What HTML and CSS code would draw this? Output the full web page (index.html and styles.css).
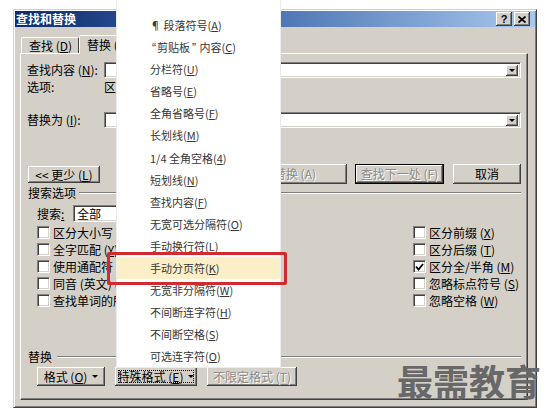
FILE: index.html
```html
<!DOCTYPE html>
<html lang="zh-CN">
<head>
<meta charset="utf-8">
<title>查找和替换</title>
<link rel="stylesheet" href="styles.css">
</head>
<body>
<div class="dialog">
  <div class="titlebar">
    <span class="title">查找和替换</span>
    <span class="tbtns">
      <span class="tbtn help">?</span>
      <span class="tbtn close"><svg width="8" height="7" viewBox="0 0 8 7"><path d="M0.5 0.5 L7.5 6.5 M7.5 0.5 L0.5 6.5" stroke="#000" stroke-width="1.7" fill="none"/></svg></span>
    </span>
  </div>
  <div class="tabs">
    <span class="tab">查找 (<u>D</u>)</span>
    <span class="tab active">替换 (<u>P</u>)</span>
  </div>
  <div class="panel">
    <div class="row r-find">
      <span class="lbl">查找内容 (<u>N</u>):</span>
      <span class="combo wide"><span class="arrow"><i></i></span></span>
    </div>
    <div class="row r-opt">
      <span class="lbl">选项:</span><span>区</span>
    </div>
    <div class="row r-repl">
      <span class="lbl">替换为 (<u>I</u>):</span>
      <span class="combo wide"><span class="arrow"><i></i></span></span>
    </div>
    <div class="row r-btns">
      <button class="btn less">&lt;&lt; 更少 (<u>L</u>)</button>
      <span class="btngroup">
        <button class="btn dis w88 all">替换 (A)</button>
        <button class="btn dis def w89">查找下一处 (F)</button>
        <button class="btn w68">取消</button>
      </span>
    </div>
    <div class="row ghead r-ghead1"><span class="gl">搜索选项</span><span class="line"></span></div>
    <div class="row r-search">
      <span class="slbl">搜索<u>:</u></span>
      <span class="combo small"><span class="val">全部</span></span>
    </div>
    <div class="checks">
      <span class="chk"><span class="box"></span>区分大小写 (<u>H</u>)</span>
      <span class="chk"><span class="box"></span>区分前缀 (<u>X</u>)</span>
      <span class="chk"><span class="box"></span>全字匹配 (<u>Y</u>)</span>
      <span class="chk"><span class="box"></span>区分后缀 (<u>T</u>)</span>
      <span class="chk"><span class="box"></span>使用通配符 (<u>U</u>)</span>
      <span class="chk"><span class="box"><svg width="9" height="8" viewBox="0 0 9 8"><path d="M1 3.5 L3.5 6.5 L8 1" stroke="#000" stroke-width="1.8" fill="none"/></svg></span>区分全/半角 (<u>M</u>)</span>
      <span class="chk"><span class="box"></span>同音 (英文) (<u>K</u>)</span>
      <span class="chk"><span class="box"></span>忽略标点符号 (<u>S</u>)</span>
      <span class="chk"><span class="box"></span>查找单词的所有</span>
      <span class="chk"><span class="box"></span>忽略空格 (<u>W</u>)</span>
    </div>
    <div class="row ghead r-ghead2"><span class="gl">替换</span><span class="line"></span></div>
    <div class="row r-bottom">
      <button class="btn w68">格式 (<u>O</u>) <i class="tri"></i></button>
      <button class="btn w82 focus">特殊格式 (<u>E</u>) <i class="tri"></i></button>
      <button class="btn dis w90">不限定格式 (T)</button>
    </div>
  </div>
</div>

<div class="menu">
  <div class="mi">¶ 段落符号(<u>A</u>)</div>
  <div class="mi"><span class="q">“</span>剪贴板<span class="q">”</span> 内容(<u>C</u>)</div>
  <div class="mi">分栏符(<u>U</u>)</div>
  <div class="mi">省略号(<u>E</u>)</div>
  <div class="mi">全角省略号(<u>F</u>)</div>
  <div class="mi">长划线(<u>M</u>)</div>
  <div class="mi">1/4 全角空格(<u>4</u>)</div>
  <div class="mi">短划线(<u>N</u>)</div>
  <div class="mi">查找内容(<u>F</u>)</div>
  <div class="mi">无宽可选分隔符(<u>O</u>)</div>
  <div class="mi">手动换行符(<u>L</u>)</div>
  <div class="mi hl">手动分页符(<u>K</u>)</div>
  <div class="mi">无宽非分隔符(<u>W</u>)</div>
  <div class="mi">不间断连字符(<u>H</u>)</div>
  <div class="mi">不间断空格(<u>S</u>)</div>
  <div class="mi">可选连字符(<u>O</u>)</div>
</div>
<div class="redbox"></div>
<div class="watermark">最需教育</div>
</body>
</html>
```
FILE: styles.css
```css
* { box-sizing: border-box; }
html, body { margin: 0; padding: 0; background: #fff; }
body {
  font-family: "Noto Sans CJK SC", "Liberation Sans", sans-serif;
  font-size: 12px;
  line-height: 14px;
  color: #000;
  width: 549px;
  height: 420px;
  overflow: hidden;
  position: relative;
}
u { text-decoration: underline; text-underline-offset: 1px; }

.dialog {
  margin: 9px 0 0 13px;
  width: 524px;
  height: 399px;
  background: #d4d0c8;
  border: 1px solid;
  border-color: #d4d0c8 #404040 #404040 #d4d0c8;
  box-shadow: inset 1px 1px #fff, inset -1px -1px #808080;
  padding: 1px;
  display: flex;
  flex-direction: column;
}

.titlebar {
  height: 16px;
  background: linear-gradient(to right, #0f2a6e 0%, #3a64a8 40%, #a8c8ee 100%);
  display: flex;
  align-items: center;
  justify-content: space-between;
  padding: 0 5px 0 1px;
}
.title { color: #fff; font-weight: 700; font-size: 12px; line-height: 16px; }
.tbtns { display: flex; gap: 2px; }
.tbtn {
  width: 16px; height: 14px;
  background: #d4d0c8;
  box-shadow: inset -1px -1px #404040, inset 1px 1px #fff, inset -2px -2px #808080;
  display: flex; align-items: center; justify-content: center;
  font-family: "Liberation Sans", sans-serif; font-weight: 700; font-size: 11px; line-height: 14px;
}

.tabs {
  margin-top: 8px;
  height: 18px;
  display: flex;
  align-items: flex-end;
  padding-left: 6px;
  position: relative;
  z-index: 2;
}
.tab {
  height: 16px;
  padding: 0 6px 0 7px;
  border: 1px solid;
  border-color: #fff #404040 transparent #fff;
  border-bottom: none;
  border-radius: 2px 2px 0 0;
  line-height: 15px;
  white-space: nowrap;
}
.tab.active {
  height: 19px;
  margin-bottom: -1px;
  padding: 0 6px 0 7px;
  background: #d4d0c8;
  line-height: 17px;
}

.panel {
  margin-left: 5px;
  width: 508px;
  height: 347px;
  border: 1px solid;
  border-color: #fff #404040 #404040 #fff;
  box-shadow: inset -1px -1px #808080;
  padding: 0 6px;
  display: flex;
  flex-direction: column;
}
.row { display: flex; align-items: center; white-space: nowrap; }
.lbl { width: 77px; flex: none; }

.r-find { margin-top: 8px; height: 16px; }
.r-opt { margin-top: 2px; height: 14px; }
.r-repl { margin-top: 18px; height: 16px; }
.r-btns { margin-top: 36px; height: 20px; align-items: flex-start; }
.r-ghead1 { margin-top: 2px; height: 14px; }
.r-search { margin-top: 5px; height: 17px; }
.r-ghead2 { margin-top: 41px; height: 14px; }
.r-bottom { margin-top: 3px; height: 19px; gap: 10px; padding-left: 10px; }

.combo {
  height: 16px;
  background: #fff;
  border: 1px solid;
  border-color: #808080 #fff #fff #808080;
  box-shadow: inset 1px 1px #404040, inset -1px -1px #d4d0c8;
  display: flex;
  align-items: center;
  justify-content: flex-end;
  padding: 1px 2px 1px 2px;
}
.combo.wide { flex: 1; }
.combo.small { width: 60px; height: 17px; justify-content: flex-start; }
.combo .val { padding-left: 1px; line-height: 14px; }
.arrow {
  width: 12px; height: 11px;
  background: #d4d0c8;
  box-shadow: inset -1px -1px #404040, inset 1px 1px #fff, inset -2px -2px #808080;
  display: flex; align-items: center; justify-content: center;
}
.arrow i, .tri {
  display: inline-block;
  width: 0; height: 0;
  border-left: 3px solid transparent;
  border-right: 3px solid transparent;
  border-top: 3px solid #000;
}
.tri { margin-left: 5px; vertical-align: middle; }

.btn {
  font: inherit;
  color: #000;
  height: 20px;
  padding: 0;
  margin: 0;
  border: none;
  border-radius: 0;
  background: #d4d0c8;
  box-shadow: inset -1px -1px #404040, inset 1px 1px #fff, inset -2px -2px #808080;
  display: flex; align-items: center; justify-content: center;
  white-space: nowrap;
  flex: none;
}
.btn.less { width: 72px; height: 17px; margin-top: 2px; margin-left: 1px; }
.btn.dis { color: #8a8a8a; text-shadow: 1px 1px 0 #fff; }
.btn.all { justify-content: flex-end; padding-right: 31px; }
.btn.def { border: 1px solid #000; }
.btn.focus { outline: 1px dotted #000; outline-offset: -4px; }
.r-bottom .btn { height: 19px; }
.w68 { width: 68px; }
.w82 { width: 82px; }
.w88 { width: 88px; }
.w89 { width: 89px; }
.w90 { width: 90px; }
.btngroup { margin-left: auto; display: flex; gap: 8px; }
.btngroup .w89 { margin-right: 1px; }

.ghead .gl { padding-left: 1px; }
.ghead .line {
  flex: 1;
  height: 2px;
  border-top: 1px solid #808080;
  border-bottom: 1px solid #fff;
  margin-left: 3px;
}
.r-ghead2 .line { margin-left: 5px; }

.slbl { width: 46px; padding-left: 10px; flex: none; }

.checks {
  margin-top: 2px;
  padding-left: 10px;
  display: grid;
  grid-template-columns: 376px 1fr;
  grid-auto-rows: 17px;
}
.chk { display: flex; align-items: center; white-space: nowrap; }
.box {
  width: 13px; height: 13px;
  margin-right: 3px;
  flex: none;
  background: #fff;
  border: 1px solid;
  border-color: #808080 #fff #fff #808080;
  box-shadow: inset 1px 1px #404040, inset -1px -1px #d4d0c8;
  display: flex; align-items: center; justify-content: center;
}

.menu {
  position: absolute;
  left: 116px;
  top: 0;
  width: 165px;
  height: 368px;
  background: #fff;
  border: 1px solid #ececec;
  border-top: none;
  padding-top: 14px;
  z-index: 5;
}
.mi {
  height: 22.1px;
  line-height: 22px;
  padding-left: 33px;
  font-size: 11px;
  color: #363636;
  white-space: nowrap;
}
.mi .q { font-family: "Liberation Sans", sans-serif; font-size: 12px; padding: 0 1px 0 2px; }
.mi.hl { background: #fcefc8; }

.redbox {
  position: absolute;
  left: 107px;
  top: 252px;
  width: 180px;
  height: 33px;
  border: 3px solid #d22a2e;
  border-radius: 2px;
  z-index: 6;
}

.watermark {
  position: absolute;
  left: 397px;
  top: 362px;
  font-size: 36px;
  line-height: 36px;
  font-weight: 700;
  color: #686868;
  white-space: nowrap;
  z-index: 7;
}
```
